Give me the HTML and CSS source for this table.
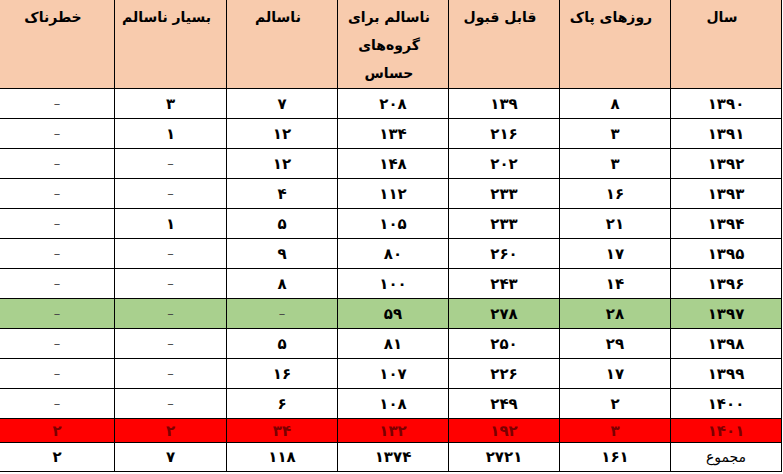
FILE: index.html
```html
<!DOCTYPE html>
<html lang="fa">
<head>
<meta charset="utf-8">
<link rel="stylesheet" href="styles.css">
</head>
<body>
<table class="aq" dir="rtl">
  <colgroup>
    <col class="c-year"><col class="c-std"><col class="c-std"><col class="c-std"><col class="c-std"><col class="c-wide"><col class="c-last">
  </colgroup>
  <thead>
    <tr class="head">
      <th>سال</th>
      <th>روزهای پاک</th>
      <th>قابل قبول</th>
      <th>ناسالم برای<br>گروه‌های<br>حساس</th>
      <th>ناسالم</th>
      <th>بسیار ناسالم</th>
      <th>خطرناک</th>
    </tr>
  </thead>
  <tbody>
    <tr><td>۱۳۹۰</td><td>۸</td><td>۱۳۹</td><td>۲۰۸</td><td>۷</td><td>۳</td><td class="dash">–</td></tr>
    <tr><td>۱۳۹۱</td><td>۳</td><td>۲۱۶</td><td>۱۳۴</td><td>۱۲</td><td>۱</td><td class="dash">–</td></tr>
    <tr><td>۱۳۹۲</td><td>۳</td><td>۲۰۲</td><td>۱۴۸</td><td>۱۲</td><td class="dash">–</td><td class="dash">–</td></tr>
    <tr><td>۱۳۹۳</td><td>۱۶</td><td>۲۳۳</td><td>۱۱۲</td><td>۴</td><td class="dash">–</td><td class="dash">–</td></tr>
    <tr><td>۱۳۹۴</td><td>۲۱</td><td>۲۳۳</td><td>۱۰۵</td><td>۵</td><td>۱</td><td class="dash">–</td></tr>
    <tr><td>۱۳۹۵</td><td>۱۷</td><td>۲۶۰</td><td>۸۰</td><td>۹</td><td class="dash">–</td><td class="dash">–</td></tr>
    <tr><td>۱۳۹۶</td><td>۱۴</td><td>۲۴۳</td><td>۱۰۰</td><td>۸</td><td class="dash">–</td><td class="dash">–</td></tr>
    <tr class="green"><td>۱۳۹۷</td><td>۲۸</td><td>۲۷۸</td><td>۵۹</td><td class="dash">–</td><td class="dash">–</td><td class="dash">–</td></tr>
    <tr><td>۱۳۹۸</td><td>۲۹</td><td>۲۵۰</td><td>۸۱</td><td>۵</td><td class="dash">–</td><td class="dash">–</td></tr>
    <tr><td>۱۳۹۹</td><td>۱۷</td><td>۲۲۶</td><td>۱۰۷</td><td>۱۶</td><td class="dash">–</td><td class="dash">–</td></tr>
    <tr><td>۱۴۰۰</td><td>۲</td><td>۲۴۹</td><td>۱۰۸</td><td>۶</td><td class="dash">–</td><td class="dash">–</td></tr>
    <tr class="red"><td>۱۴۰۱</td><td>۳</td><td>۱۹۲</td><td>۱۳۲</td><td>۳۴</td><td>۲</td><td>۲</td></tr>
    <tr class="total"><td class="label">مجموع</td><td>۱۶۱</td><td>۲۷۲۱</td><td>۱۳۷۴</td><td>۱۱۸</td><td>۷</td><td>۲</td></tr>
  </tbody>
</table>
</body>
</html>
```
FILE: styles.css
```css
html, body {
  margin: 0;
  padding: 0;
  background: #ffffff;
}
body {
  width: 783px;
  height: 474px;
  overflow: hidden;
}
.aq {
  direction: rtl;
  border-collapse: collapse;
  table-layout: fixed;
  width: 782px;
  margin: -1px 0 0 -1px;
  font-family: "DejaVu Sans", sans-serif;
  font-weight: bold;
  font-size: 15px;
  color: #000;
}
.c-year { width: 111px; }
.c-std { width: 111px; }
.c-wide { width: 112px; }
.c-last { width: 115px; }
.aq th, .aq td {
  border: 1px solid #000;
  text-align: center;
  padding: 0;
}
.head th {
  background: #f8cbad;
  height: 89px;
  vertical-align: top;
  line-height: 28px;
  padding-top: 3px;
  padding-right: 8px;
  font-size: 14px;
  box-sizing: border-box;
}
.aq tbody tr { height: 30px; }
.aq tbody tr.red { height: 24px; }
.aq tbody tr.total { height: 29px; }
.aq td { vertical-align: middle; line-height: 18px; }
.dash { color: #444; font-weight: normal; font-size: 13px; }
.green td { background: #a9d08e; }
.red td { background: #ff0000; color: #7a0000; }
.label { font-weight: normal; font-size: 14px; }
```
